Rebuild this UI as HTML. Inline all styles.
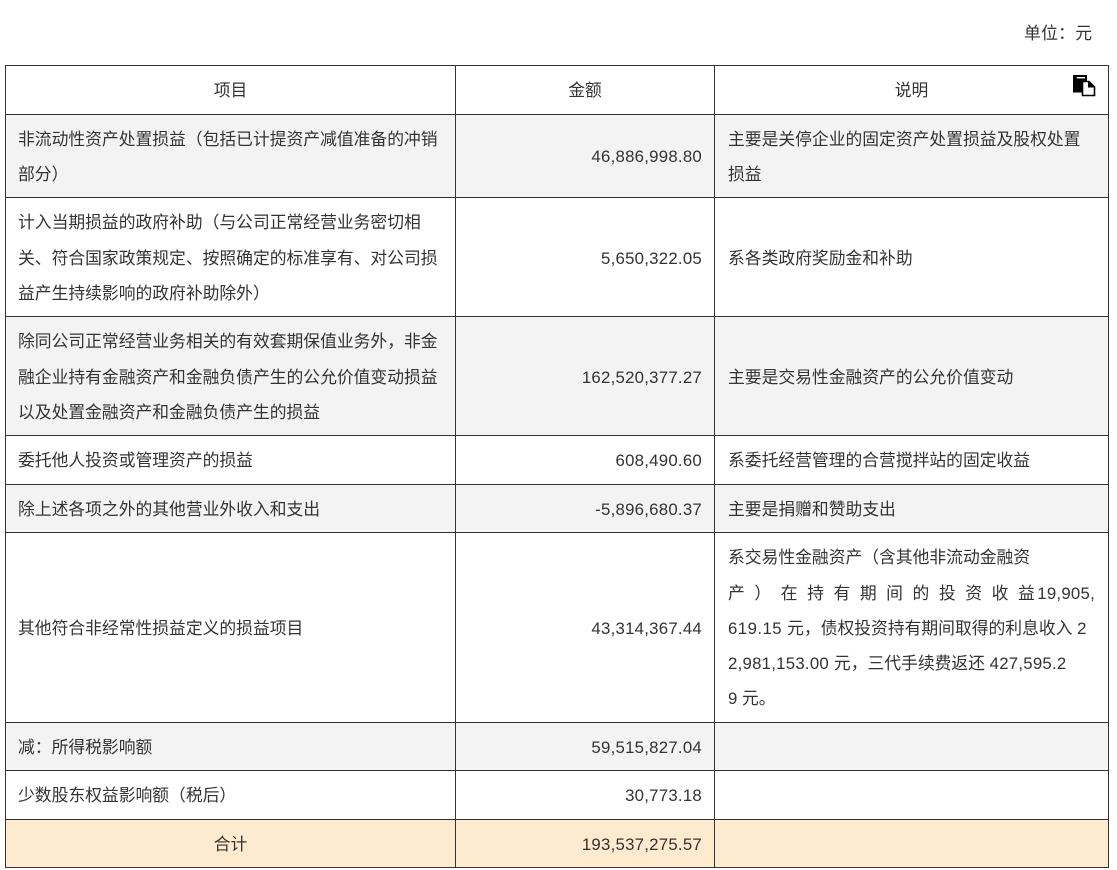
<!DOCTYPE html>
<html lang="zh"><head><meta charset="utf-8"><style>
html,body{margin:0;padding:0;background:#fff;width:1117px;height:870px;overflow:hidden}
body{position:relative;font-family:"Liberation Sans","Noto Sans CJK SC",sans-serif;font-size:16.8px;color:#333}
.b{position:absolute;left:6px;width:1102px}
.l{position:absolute;white-space:nowrap;line-height:24px;height:24px;margin-top:1px}
.v{position:absolute;background:#333;width:1px;top:65px;height:803px}
.h{position:absolute;background:#333;height:1px;left:5px;width:1104px}
.n{right:415px;letter-spacing:.25px}
.c{text-align:center}
i{font-style:normal;letter-spacing:.25px}
i.w{letter-spacing:.45px}
</style></head><body>
<div class="l" style="left:1024px;top:21px;letter-spacing:.3px">单位：元</div>
<div class="b" style="top:115px;height:82px;background:#f3f3f3"></div>
<div class="b" style="top:317px;height:118px;background:#f3f3f3"></div>
<div class="b" style="top:485px;height:47px;background:#f3f3f3"></div>
<div class="b" style="top:723px;height:47px;background:#f3f3f3"></div>
<div class="b" style="top:820px;height:47px;background:#feeacf"></div>
<div class="h" style="top:65px"></div><div class="h" style="top:114px"></div><div class="h" style="top:197px"></div><div class="h" style="top:316px"></div><div class="h" style="top:435px"></div><div class="h" style="top:484px"></div><div class="h" style="top:532px"></div><div class="h" style="top:722px"></div><div class="h" style="top:770px"></div><div class="h" style="top:819px"></div><div class="h" style="top:867px"></div>
<div class="v" style="left:5px"></div><div class="v" style="left:455px"></div><div class="v" style="left:714px"></div><div class="v" style="left:1108px"></div>
<div class="l c" style="left:6px;width:449px;top:78px">项目</div>
<div class="l c" style="left:456px;width:258px;top:78px">金额</div>
<div class="l c" style="left:715px;width:393px;top:78px">说明</div>
<svg style="position:absolute;left:1072px;top:74px" width="24" height="23" viewBox="0 0 24 23"><path d="M1 1H15V7H10V18.5H1Z" fill="#000"/><path d="M4.7 3.7H13" stroke="#fff" stroke-width="1.4"/><path d="M10.5 7.5H17L22.5 13V21.5H10.5Z" fill="#fff" stroke="#000" stroke-width="1.6"/><path d="M16.5 7.5V13H22.5" fill="#000" stroke="#000" stroke-width="1"/></svg>

<div class="l" style="left:18px;top:127px">非流动性资产处置损益（包括已计提资产减值准备的冲销</div>
<div class="l" style="left:18px;top:162px">部分）</div>
<div class="l n" style="top:144px">46,886,998.80</div>
<div class="l" style="left:728px;top:127px">主要是关停企业的固定资产处置损益及股权处置</div>
<div class="l" style="left:728px;top:162px">损益</div>

<div class="l" style="left:18px;top:210px">计入当期损益的政府补助（与公司正常经营业务密切相</div>
<div class="l" style="left:18px;top:246px">关、符合国家政策规定、按照确定的标准享有、对公司损</div>
<div class="l" style="left:18px;top:281px">益产生持续影响的政府补助除外）</div>
<div class="l n" style="top:246px">5,650,322.05</div>
<div class="l" style="left:728px;top:246px">系各类政府奖励金和补助</div>

<div class="l" style="left:18px;top:329px">除同公司正常经营业务相关的有效套期保值业务外，非金</div>
<div class="l" style="left:18px;top:365px">融企业持有金融资产和金融负债产生的公允价值变动损益</div>
<div class="l" style="left:18px;top:400px">以及处置金融资产和金融负债产生的损益</div>
<div class="l n" style="top:365px">162,520,377.27</div>
<div class="l" style="left:728px;top:365px">主要是交易性金融资产的公允价值变动</div>

<div class="l" style="left:18px;top:448px">委托他人投资或管理资产的损益</div>
<div class="l n" style="top:448px">608,490.60</div>
<div class="l" style="left:728px;top:448px">系委托经营管理的合营搅拌站的固定收益</div>

<div class="l" style="left:18px;top:497px">除上述各项之外的其他营业外收入和支出</div>
<div class="l n" style="top:497px">-5,896,680.37</div>
<div class="l" style="left:728px;top:497px">主要是捐赠和赞助支出</div>

<div class="l" style="left:18px;top:616px">其他符合非经常性损益定义的损益项目</div>
<div class="l n" style="top:616px">43,314,367.44</div>
<div class="l" style="left:728px;top:545px">系交易性金融资产（含其他非流动金融资</div>
<div class="l" style="left:728px;top:581px;width:367px;white-space:normal;text-align:justify;text-align-last:justify">产 ） 在 持 有 期 间 的 投 资 收 益<i>19,905,</i></div>
<div class="l" style="left:728px;top:616px"><i class="w">619.15 </i>元，债权投资持有期间取得的利息收入 <i>2</i></div>
<div class="l" style="left:728px;top:651px"><i>2,981,153.00 </i>元，三代手续费返还 <i>427,595.2</i></div>
<div class="l" style="left:728px;top:686px">9 元。</div>

<div class="l" style="left:18px;top:735px">减：所得税影响额</div>
<div class="l n" style="top:735px">59,515,827.04</div>
<div class="l" style="left:18px;top:783px">少数股东权益影响额（税后）</div>
<div class="l n" style="top:783px">30,773.18</div>
<div class="l c" style="left:6px;width:449px;top:832px">合计</div>
<div class="l n" style="top:832px">193,537,275.57</div>
</body></html>
